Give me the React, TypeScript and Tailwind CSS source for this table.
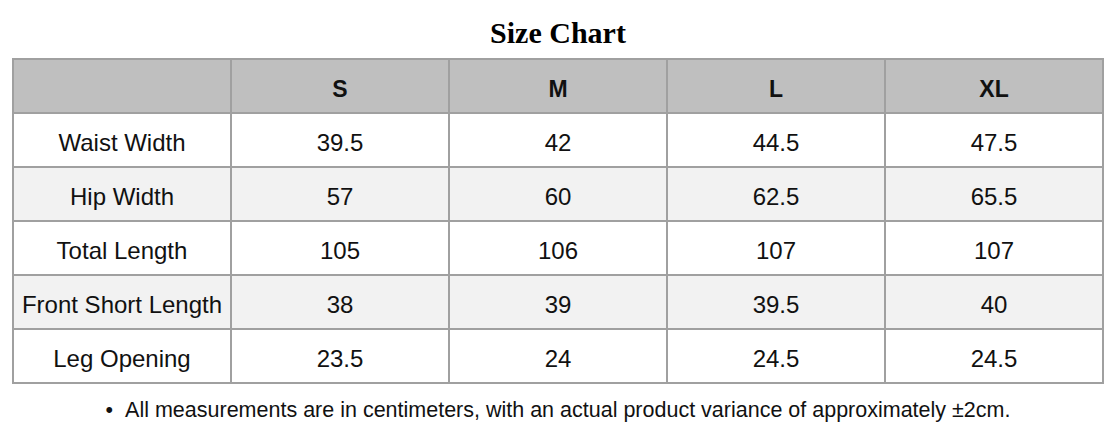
const sizes = ['S', 'M', 'L', 'XL']

const rows: [string, string[]][] = [
  ['Waist Width', ['39.5', '42', '44.5', '47.5']],
  ['Hip Width', ['57', '60', '62.5', '65.5']],
  ['Total Length', ['105', '106', '107', '107']],
  ['Front Short Length', ['38', '39', '39.5', '40']],
  ['Leg Opening', ['23.5', '24', '24.5', '24.5']],
]

export default function App() {
  return (
    <div className="w-[1116px] h-[443px] bg-white pt-[15px] px-[12px] font-['Liberation_Sans',Arial,sans-serif] text-[#111]">
      <h2 className="text-center font-['Liberation_Serif',serif] font-bold text-[30px] leading-[36px] text-black">
        Size Chart
      </h2>
      <table className="mt-[7px] w-[1092px] table-fixed border-collapse border-2 border-[#a0a0a0] text-[24px]">
        <thead>
          <tr className="bg-[#bfbfbf]">
            <th className="h-[54px] pt-[6px] border-2 border-[#a0a0a0]" />
            {sizes.map((s) => (
              <th key={s} className="h-[54px] pt-[6px] border-2 border-[#a0a0a0] font-bold text-[23px] text-center">
                {s}
              </th>
            ))}
          </tr>
        </thead>
        <tbody>
          {rows.map(([label, vals], i) => (
            <tr key={label} className={i % 2 === 1 ? 'bg-[#f2f2f2]' : 'bg-white'}>
              <td className="h-[54px] pt-[5px] border-2 border-[#a0a0a0] text-center whitespace-nowrap">{label}</td>
              {vals.map((v, j) => (
                <td key={j} className="h-[54px] pt-[5px] border-2 border-[#a0a0a0] text-center">
                  {v}
                </td>
              ))}
            </tr>
          ))}
        </tbody>
      </table>
      <div className="mt-[14px] flex justify-center items-center gap-[12px] text-[21.5px] leading-[24px]">
        <span>•</span>
        <span>All measurements are in centimeters, with an actual product variance of approximately ±2cm.</span>
      </div>
    </div>
  )
}
